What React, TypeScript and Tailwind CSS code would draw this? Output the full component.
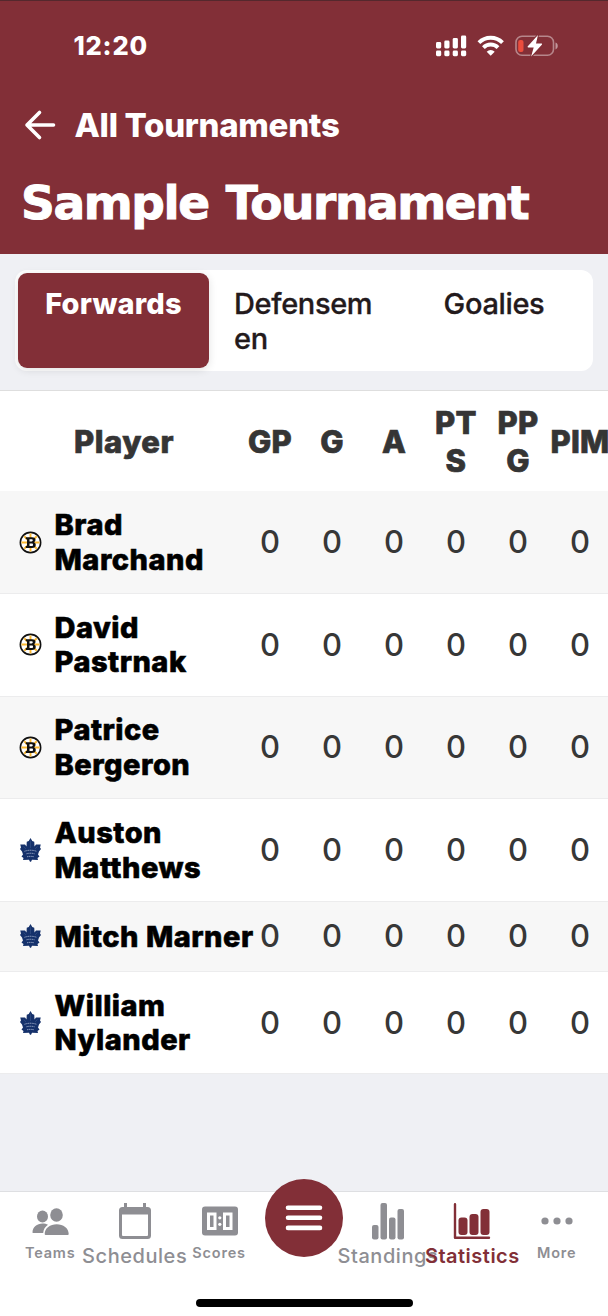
import type { ReactNode } from "react";

type Team = "bruins" | "leafs";

const players: { name: string[]; team: Team }[] = [
  { name: ["Brad", "Marchand"], team: "bruins" },
  { name: ["David", "Pastrnak"], team: "bruins" },
  { name: ["Patrice", "Bergeron"], team: "bruins" },
  { name: ["Auston", "Matthews"], team: "leafs" },
  { name: ["Mitch Marner"], team: "leafs" },
  { name: ["William", "Nylander"], team: "leafs" },
];

const columns = [["GP"], ["G"], ["A"], ["PT", "S"], ["PP", "G"], ["PIM"]];

function BruinsLogo() {
  return (
    <svg className="h-[23px] w-[23px]" viewBox="0 0 46 46">
      <circle cx="23" cy="23" r="20.3" fill="#fff" stroke="#111" strokeWidth="3.200" />
      <path d="M23 5v36M5 23h36M10.500 10.500l25 25M35.500 10.500l-25 25" stroke="#fcb930" strokeWidth="3.800" />
      <path
        fill="#111"
        d="M13.500 12.500h12.500c5 0 7 2 7 5.200 0 2.600-1.300 4-3 5 2.200 1 3.500 2.700 3.500 5.300 0 4-2.700 6-7.500 6H13.500v-4h2.500v-13.500h-2.500z"
      />
      <path fill="#fff" d="M21 16.500v4.300h4c1.700 0 2.500-.8 2.500-2.200s-.8-2.100-2.500-2.100zM21 25v5h4.500c1.800 0 2.600-.9 2.600-2.500s-.8-2.500-2.600-2.500z" />
    </svg>
  );
}

function LeafsLogo() {
  return (
    <svg className="h-[24px] w-[23px]" viewBox="0 0 46 48">
      <path
        fill="#15316b"
        d="M23 0L26.500 6L30.500 7.500L31 17L34 13L43.500 13L42 19L44 22L40 27L38 33L41 37L37 40L38 44L26 43.500L24 47.500H22L20 43.500L8 44L9 40L5 37L8 33L6 27L2 22L4 19L2.500 13L12 13L15 17L15.500 7.500L19.500 6Z"
      />
      <path
        fill="none"
        stroke="#a9b6d1"
        strokeWidth="1.800"
        strokeDasharray="2.400 1.200"
        d="M11 26.500q12-4 24 0M15 31.500q8-2 16 0M16 37.500q7-1.500 14 0"
      />
      <path d="M23 5v15M9 17l5 5M37 17l-5 5" stroke="#3f5a8e" strokeWidth="1" />
    </svg>
  );
}

function StatusIcons() {
  return (
    <svg className="h-[24px] w-[124px]" viewBox="-0.500 0 124 24">
      <g fill="#fff">
        <rect x="0.500" y="8" width="5.200" height="6.500" rx="1.400" />
        <rect x="8.800" y="6.500" width="5.200" height="8" rx="1.400" />
        <rect x="17.200" y="4" width="5.200" height="10.500" rx="1.400" />
        <rect x="25.500" y="1.500" width="5.200" height="13" rx="1.400" />
        <rect x="0.500" y="16.500" width="5.200" height="5.700" rx="1.400" />
        <rect x="8.800" y="16.500" width="5.200" height="5.700" rx="1.400" />
        <rect x="17.200" y="16.500" width="5.200" height="5.700" rx="1.400" />
        <rect x="25.500" y="16.500" width="5.200" height="5.700" rx="1.400" />
      </g>
      <g fill="none" stroke="#fff" strokeWidth="3.900">
        <path d="M43.400 8.700a16.600 16.600 0 0 1 23.600 0" />
        <path d="M47.900 13.600a10.300 10.300 0 0 1 14.600 0" />
      </g>
      <path d="M55.200 21.700l-4-4a5.700 5.700 0 0 1 8 0z" fill="#fff" />
      <rect x="80.500" y="2.300" width="37.500" height="19" rx="6" fill="none" stroke="#fff" strokeOpacity=".42" strokeWidth="1.600" />
      <path d="M120 8.500c3 1 3 5.900 0 6.900z" fill="#fff" fillOpacity=".5" />
      <rect x="82.700" y="6" width="5.300" height="12" rx="2" fill="#eb4d3d" />
      <path
        d="M102.500 1L92.300 12.300c-.5.600-.2 1.200.4 1.200h5.500L95.600 22.500l10.700-11.700c.5-.6.200-1.200-.4-1.200h-5.400z"
        fill="#fff"
        stroke="#822f37"
        strokeWidth="2"
        paintOrder="stroke"
      />
    </svg>
  );
}

function Row({ name, team, shaded }: { name: string[]; team: Team; shaded: boolean }) {
  const height = name.length > 1 ? "h-[102.600px]" : "h-[70px]";
  return (
    <div className={`flex items-center border-b border-[#ececed] ${height} ${shaded ? "bg-[#f7f7f7]" : "bg-white"}`}>
      <div className="flex w-[239px] shrink-0 items-center">
        <div className="ml-[19px] flex w-[35.500px] shrink-0 items-center">
          {team === "bruins" ? <BruinsLogo /> : <LeafsLogo />}
        </div>
        <div className="pt-px text-[29px] leading-[34.500px] font-extrabold tracking-[0.500px] whitespace-nowrap text-black [-webkit-text-stroke:0.600px_black]">
          {name.map((part) => (
            <div key={part}>{part}</div>
          ))}
        </div>
      </div>
      {columns.map((c) => (
        <div key={c.join("")} className="w-[62px] shrink-0 text-center text-[31px] leading-9 font-medium text-[#373737]">
          0
        </div>
      ))}
    </div>
  );
}

function NavItem({ label, labelClass, children }: { label: string; labelClass: string; children: ReactNode }) {
  return (
    <div className="flex w-0 flex-1 flex-col items-center">
      <div className="flex h-[50px] w-full items-center justify-center pt-[8px]">{children}</div>
      <div className={`whitespace-nowrap ${labelClass}`}>{label}</div>
    </div>
  );
}

const smallLabel = "text-[14.500px] leading-[22px] font-semibold tracking-[0.800px]";
const largeLabel = "text-[20px] leading-[28px] font-medium tracking-[0.550px]";

export default function App() {
  return (
    <div className="flex h-[1316px] w-[608px] flex-col overflow-hidden bg-[#eff0f4] font-['Inter',sans-serif]">
      <header className="h-[254.400px] shrink-0 border-t border-[#54282d] bg-[#822f37] text-white">
        <div className="flex h-[89px] items-center justify-between pr-[49px] pl-[73.500px]">
          <div className="text-[25.500px] leading-8 font-extrabold tracking-[0.800px]">12:20</div>
          <StatusIcons />
        </div>
        <div className="flex h-[70px] items-center pl-[24px]">
          <svg className="h-[32px] w-[32px]" viewBox="0 0 32 32" fill="none" stroke="#fff" strokeWidth="3.600" strokeLinecap="round" strokeLinejoin="round">
            <path d="M15.500 3.500L3 16l12.500 12.500M3 16h26.500" />
          </svg>
          <div className="pl-[18.500px] text-[33px] leading-10 font-extrabold tracking-[-0.300px] whitespace-nowrap">All Tournaments</div>
        </div>
        <h1 className="flex h-[86px] items-center pl-[21px] font-['DejaVu_Sans',sans-serif] text-[47px] leading-[60px] font-bold tracking-[-1.400px] [word-spacing:2px] whitespace-nowrap [-webkit-text-stroke:1px_white]">
          Sample Tournament
        </h1>
      </header>

      <div className="h-[135.600px] shrink-0 px-[15px] pt-[15.500px]">
        <div className="flex h-[101px] rounded-[12px] bg-white p-[3px] text-[29px] leading-[35px] font-medium tracking-[-0.350px] text-[#231a1c]">
          <div className="w-[191px] shrink-0 rounded-[9px] bg-[#822f37] pt-[13px] text-center font-extrabold tracking-[0.200px] text-white shadow-[0_2px_8px_rgba(0,0,0,0.12)]">
            Forwards
          </div>
          <div className="flex w-[190px] shrink-0 flex-col pt-[13px] pl-[25px] whitespace-nowrap [-webkit-text-stroke:0.300px_#231a1c]">
            <span>Defensem</span>
            <span>en</span>
          </div>
          <div className="w-[190px] shrink-0 pt-[13px] text-center [-webkit-text-stroke:0.300px_#231a1c]">Goalies</div>
        </div>
      </div>

      <main className="shrink-0">
        <div className="flex h-[101.500px] items-center border-t border-[#dedede] bg-white pt-px text-[31px] leading-[38px] font-extrabold text-[#353535] [-webkit-text-stroke:0.700px_#353535]">
          <div className="w-[239px] shrink-0 pl-[9px] text-center tracking-[0.500px]">Player</div>
          {columns.map((c) => (
            <div key={c.join("")} className="flex w-[62px] shrink-0 flex-col items-center tracking-[0.300px] whitespace-nowrap">
              {c.map((part) => (
                <span key={part}>{part}</span>
              ))}
            </div>
          ))}
        </div>
        {players.map((p, i) => (
          <Row key={p.name.join(" ")} name={p.name} team={p.team} shaded={i % 2 === 0} />
        ))}
      </main>

      <nav className="mt-auto h-[125px] shrink-0 border-t border-[#dedfe2] bg-white text-[#8e8e93]">
        <div className="flex h-[106.500px] pr-[9px] pl-2">
          <NavItem label="Teams" labelClass={smallLabel}>
            <svg className="h-[38px] w-[38px]" viewBox="-0.500 0.500 38 38" fill="#8e8e93">
              <ellipse cx="11" cy="15" rx="5.500" ry="6" />
              <path d="M1 31c0-5.500 4.500-9 10-9 2 0 4 .5 5.500 1.300-3 2-4.500 4.800-4.800 8.200H2q-1 0-1-.5z" />
              <ellipse cx="25" cy="13.500" rx="6.300" ry="6.800" />
              <path d="M13.200 32.500c0-6 5.500-9.800 12-9.800s12 3.800 12 9.800q0 1-1 1h-22q-1 0-1-1z" />
            </svg>
          </NavItem>
          <NavItem label="Schedules" labelClass={largeLabel}>
            <svg className="mt-[1px] h-[37px] w-[34px]" viewBox="0 0 34 37">
              <path
                fill="#8e8e93"
                fillRule="evenodd"
                d="M6 0h3v4h16V0h3v4h1.500Q33 4 33 7.500v25Q33 36 29.500 36h-25Q1 36 1 32.500v-25Q1 4 4.500 4H6zM4 11.500v20.500q0 1 1 1h24q1 0 1-1V11.500z"
              />
            </svg>
          </NavItem>
          <NavItem label="Scores" labelClass={smallLabel}>
            <svg className="ml-[2px] h-[30px] w-[36px]" viewBox="0 0 36 30">
              <rect x="0" y="0.500" width="36" height="29" rx="3" fill="#8e8e93" />
              <rect x="6.500" y="8" width="6.500" height="14.500" fill="none" stroke="#fff" strokeWidth="3" />
              <rect x="22.500" y="8" width="6.500" height="14.500" fill="none" stroke="#fff" strokeWidth="3" />
              <circle cx="17.800" cy="11.800" r="1.600" fill="#fff" />
              <circle cx="17.800" cy="18.300" r="1.600" fill="#fff" />
            </svg>
          </NavItem>
          <div className="flex w-0 flex-1 justify-center">
            <button className="-mt-[13px] ml-[1px] flex h-[78px] w-[78px] shrink-0 items-center justify-center rounded-full bg-[#822f37]">
              <svg className="h-[26px] w-[38px]" viewBox="0 0 38 26" stroke="#fff" strokeWidth="4.600" strokeLinecap="round">
                <path d="M3 2.700h32M3 12.800h32M3 22.900h32" />
              </svg>
            </button>
          </div>
          <NavItem label="Standings" labelClass={largeLabel}>
            <svg className="h-[38px] w-[34px]" viewBox="0 0 34 38" fill="#8e8e93">
              <rect x="1" y="23" width="6.500" height="14.500" rx="2" />
              <rect x="9.500" y="1" width="6.500" height="36.500" rx="2" />
              <rect x="18" y="15.500" width="6.500" height="22" rx="2" />
              <rect x="26.500" y="7" width="6.500" height="30.500" rx="2" />
            </svg>
          </NavItem>
          <NavItem label="Statistics" labelClass="relative z-10 text-[20px] leading-[28px] font-semibold tracking-[0.500px] text-[#822f37]">
            <svg className="mr-[1px] h-[38px] w-[38px]" viewBox="0 0 38 38" fill="#822f37">
              <path d="M2 2.200v33.600h34" fill="none" stroke="#822f37" strokeWidth="2.400" strokeLinecap="round" strokeLinejoin="round" />
              <rect x="5.500" y="15.500" width="9" height="17.500" rx="3" />
              <rect x="16.500" y="12" width="9" height="21" rx="3" />
              <rect x="27.500" y="7" width="9" height="26" rx="3" />
            </svg>
          </NavItem>
          <NavItem label="More" labelClass={smallLabel}>
            <svg className="h-[10px] w-[34px]" viewBox="0 0 34 10" fill="#8e8e93">
              <circle cx="5" cy="5" r="3.600" />
              <circle cx="17" cy="5" r="3.600" />
              <circle cx="29" cy="5" r="3.600" />
            </svg>
          </NavItem>
        </div>
        <div className="mx-auto h-[8px] w-[217px] rounded-full bg-black" />
      </nav>
    </div>
  );
}
